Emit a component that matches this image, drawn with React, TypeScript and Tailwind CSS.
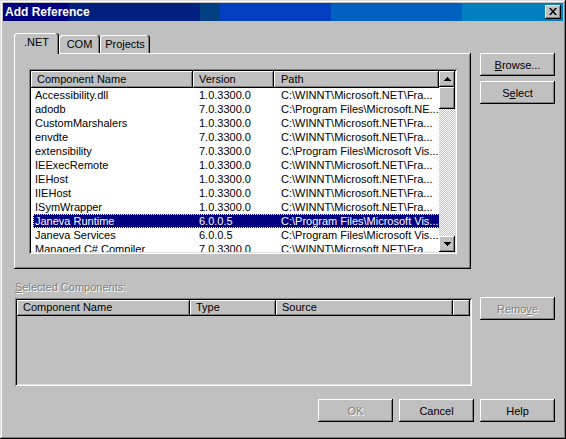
import React from "react";

const RAISED =
  "shadow-[inset_-1px_-1px_#000,inset_1px_1px_#fff,inset_-2px_-2px_#808080]";
const SUNKEN =
  "shadow-[inset_1px_1px_#808080,inset_-1px_-1px_#fff,inset_2px_2px_#000,inset_-2px_-2px_#dfdfdf]";
const DISABLED = "text-[#808080] [text-shadow:1px_1px_0_#fff]";

const ROWS: [string, string, string][] = [
  ["Accessibility.dll", "1.0.3300.0", "C:\\WINNT\\Microsoft.NET\\Fra..."],
  ["adodb", "7.0.3300.0", "C:\\Program Files\\Microsoft.NE..."],
  ["CustomMarshalers", "1.0.3300.0", "C:\\WINNT\\Microsoft.NET\\Fra..."],
  ["envdte", "7.0.3300.0", "C:\\WINNT\\Microsoft.NET\\Fra..."],
  ["extensibility", "7.0.3300.0", "C:\\Program Files\\Microsoft Vis..."],
  ["IEExecRemote", "1.0.3300.0", "C:\\WINNT\\Microsoft.NET\\Fra..."],
  ["IEHost", "1.0.3300.0", "C:\\WINNT\\Microsoft.NET\\Fra..."],
  ["IIEHost", "1.0.3300.0", "C:\\WINNT\\Microsoft.NET\\Fra..."],
  ["ISymWrapper", "1.0.3300.0", "C:\\WINNT\\Microsoft.NET\\Fra..."],
  ["Janeva Runtime", "6.0.0.5", "C:\\Program Files\\Microsoft Vis..."],
  ["Janeva Services", "6.0.0.5", "C:\\Program Files\\Microsoft Vis..."],
  ["Managed C# Compiler", "7.0.3300.0", "C:\\WINNT\\Microsoft.NET\\Fra..."],
];

const SELECTED = 9;

function Arrow({ down }: { down?: boolean }) {
  return (
    <svg width="7" height="4" viewBox="0 0 7 4" className={down ? "rotate-180" : ""}>
      <rect x="3" y="0" width="1" height="1" fill="#000" />
      <rect x="2" y="1" width="3" height="1" fill="#000" />
      <rect x="1" y="2" width="5" height="1" fill="#000" />
      <rect x="0" y="3" width="7" height="1" fill="#000" />
    </svg>
  );
}

function Button({
  children,
  disabled,
}: {
  children: React.ReactNode;
  disabled?: boolean;
}) {
  return (
    <div
      className={`flex items-center justify-center w-[75px] h-[23px] bg-[#c0c0c0] leading-[14px] ${RAISED} ${
        disabled ? DISABLED : "text-black"
      }`}
    >
      {children}
    </div>
  );
}

function HeaderCell({ label, className }: { label: string; className: string }) {
  return (
    <div
      className={`h-full pl-[6px] bg-[#c0c0c0] whitespace-nowrap overflow-hidden ${RAISED} ${className}`}
    >
      {label}
    </div>
  );
}

function Tab({ label, active, width }: { label: string; active?: boolean; width: string }) {
  return (
    <div
      className={`flex items-center justify-center bg-[#c0c0c0] rounded-t-[3px] shadow-[inset_-1px_0_#000,inset_1px_1px_#fff,inset_-2px_0_#808080] ${width} ${
        active ? "relative z-10 h-[21px] -mb-px pb-[2px]" : "h-[18px]"
      }`}
    >
      {label}
    </div>
  );
}

export default function App() {
  return (
    <div
      className={`flex flex-col w-[566px] h-[439px] p-[3px] bg-[#c0c0c0] text-[11px] text-black font-['Liberation_Sans',Arial,sans-serif] shadow-[inset_-1px_-1px_#000,inset_1px_1px_#dfdfdf,inset_-2px_-2px_#808080,inset_2px_2px_#fff]`}
    >
      {/* Title bar */}
      <div className="flex items-center justify-between h-[18px] pl-[2px] pr-[2px] bg-[linear-gradient(90deg,#000080_0_66px,#002080_66px_197px,#004080_197px_217px,#0040c0_217px_328px,#0060c0_328px_459px,#0080c0_459px)]">
        <span className="text-white font-bold text-[12px] leading-[18px]">Add Reference</span>
        <div className={`flex items-center justify-center w-[16px] h-[14px] bg-[#c0c0c0] ${RAISED}`}>
          <svg width="8" height="7" viewBox="0 0 8 7" className="-mt-px">
            <path d="M0 0h2l2 2.4L6 0h2L5 3.5 8 7H6L4 4.6 2 7H0l3-3.5z" fill="#000" />
          </svg>
        </div>
      </div>

      {/* Body */}
      <div className="flex flex-col flex-1 pl-[11px] pt-[12px]">
        <div className="flex">
          <div className="flex flex-col w-[457px]">
            <div className="flex items-end h-[20px]">
              <Tab label=".NET" active width="w-[45px]" />
              <Tab label="COM" width="w-[41px]" />
              <Tab label="Projects" width="w-[50px]" />
            </div>

            <div className={`h-[216px] pt-[16px] pl-[15px] bg-[#c0c0c0] ${RAISED}`}>
              <div className={`flex w-[428px] h-[185px] p-[2px] bg-white ${SUNKEN}`}>
                <div className="flex flex-col w-[408px] overflow-hidden">
                  <div className="flex h-[17px] leading-[17px] shrink-0">
                    <HeaderCell label="Component Name" className="w-[162px]" />
                    <HeaderCell label="Version" className="w-[81px]" />
                    <HeaderCell label="Path" className="flex-1 pl-[7px]" />
                  </div>
                  {ROWS.map(([name, version, path], i) => {
                    const sel = i === SELECTED;
                    return (
                      <div key={name} className="flex h-[14px] shrink-0 pl-[2px]">
                        <div
                          className={`flex flex-1 leading-[12px] border border-dotted whitespace-nowrap ${
                            sel
                              ? "bg-[#000080] text-white border-[#ffff7f]"
                              : "border-transparent"
                          }`}
                        >
                          <div className="w-[159px] pl-[1px] overflow-hidden">{name}</div>
                          <div className="w-[81px] pl-[6px] overflow-hidden">{version}</div>
                          <div className="flex-1 pl-[7px] overflow-hidden">{path}</div>
                        </div>
                      </div>
                    );
                  })}
                </div>

                {/* Scrollbar */}
                <div className="flex flex-col w-[16px]">
                  <div className={`flex items-center justify-center h-[16px] bg-[#c0c0c0] ${RAISED}`}>
                    <Arrow />
                  </div>
                  <div className={`h-[22px] bg-[#c0c0c0] ${RAISED}`} />
                  <div className="flex-1 bg-[repeating-conic-gradient(#c0c0c0_0_25%,#ffffff_0_50%)] bg-[length:2px_2px]" />
                  <div className={`flex items-center justify-center h-[16px] bg-[#c0c0c0] ${RAISED}`}>
                    <Arrow down />
                  </div>
                </div>
              </div>
            </div>
          </div>

          <div className="flex flex-col gap-[5px] ml-[9px] pt-[20px]">
            <Button>
              <span className="underline">B</span>rowse...
            </Button>
            <Button>
              S<span className="underline">e</span>lect
            </Button>
          </div>
        </div>

        <div className={`mt-[11px] ml-[1px] leading-[14px] ${DISABLED}`}>
          <span className="underline">S</span>elected Components:
        </div>

        <div className="flex mt-[3px]">
          <div className={`w-[457px] h-[88px] mt-[1px] ml-[1px] p-[2px] bg-[#c0c0c0] ${SUNKEN}`}>
            <div className="flex h-[16px] leading-[15px]">
              <HeaderCell label="Component Name" className="w-[173px]" />
              <HeaderCell label="Type" className="w-[86px]" />
              <HeaderCell label="Source" className="w-[177px]" />
              <HeaderCell label="" className="w-[17px]" />
            </div>
          </div>
          <div className="ml-[8px]">
            <Button disabled>
              Remo<span className="underline">v</span>e
            </Button>
          </div>
        </div>

        <div className="flex justify-end gap-[6px] mt-[13px] pr-[8px]">
          <Button disabled>OK</Button>
          <Button>Cancel</Button>
          <Button>Help</Button>
        </div>
      </div>
    </div>
  );
}
